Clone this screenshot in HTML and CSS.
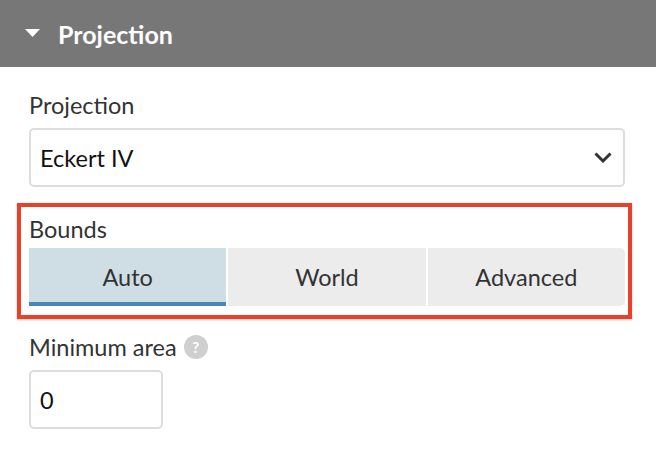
FILE: index.html
```html
<!DOCTYPE html>
<html>
<head>
<meta charset="utf-8">
<link rel="stylesheet" href="styles.css">
</head>
<body>
<div class="header">
  <svg class="caret" width="15" height="8" viewBox="0 0 15 8"><polygon points="0,0 15,0 7.5,8" fill="#fff"/></svg>
  <span class="title">Projection</span>
</div>
<div class="content">
  <div class="field first">
    <div class="label">Projection</div>
    <div class="select">
      <span>Eckert IV</span>
      <svg class="chev" width="18" height="11" viewBox="0 0 18 11"><polyline points="1.5,1.5 9,9 16.5,1.5" fill="none" stroke="#333" stroke-width="3"/></svg>
    </div>
  </div>
  <div class="field group">
    <div class="label">Bounds</div>
    <div class="seg">
      <div class="btn active">Auto</div>
      <div class="btn">World</div>
      <div class="btn last">Advanced</div>
    </div>
  </div>
  <div class="field">
    <div class="label">Minimum area <span class="help">?</span></div>
    <div class="input">0</div>
  </div>
</div>
</body>
</html>
```
FILE: styles.css
```css
html, body { margin: 0; padding: 0; background: #fff; }
body { font-family: "Lato", "Open Sans", sans-serif; color: #333; width: 656px; height: 456px; overflow: hidden; }
.header { height: 67px; background: #777; display: flex; align-items: center; padding-left: 25px; box-sizing: border-box; }
.caret { margin-right: 18px; margin-top: -2px; }
.title { color: #fff; font-weight: 700; font-size: 25px; }
.content { padding: 23px 31px 0 29px; }
.label { font-size: 23.5px; line-height: 30px; color: #333; display: flex; align-items: center; }
.field { margin-bottom: 18px; }
.field.first { margin-bottom: 27px; }
.field > .label { margin-bottom: 8px; }
.select { height: 59px; box-sizing: border-box; border: 2px solid #ddd; border-radius: 5px; display: flex; align-items: center; justify-content: space-between; padding: 0 11px 0 9px; font-size: 23.5px; color: #111; }
.group { position: relative; margin-bottom: 26px; }
.group::after { content: ""; position: absolute; left: -12px; right: -7px; top: -11px; bottom: -13px; border: 4px solid #e8412a; box-shadow: 0 1px 2px rgba(0,0,0,0.25); pointer-events: none; }
.group > .label { margin-bottom: 4px; }
.seg { display: flex; gap: 2px; height: 58px; }
.btn { flex: 1; background: #ececec; display: flex; align-items: center; justify-content: center; font-size: 23.5px; color: #333; box-sizing: border-box; }
.btn.active { background: #cfdde5; border-bottom: 4px solid #4a87b5; padding-top: 4px; }
.btn.last { border-radius: 0 5px 5px 0; }
.help { display: inline-flex; width: 24px; height: 24px; border-radius: 50%; background: #cfcfcf; color: #fff; font-weight: 700; font-size: 15px; align-items: center; justify-content: center; margin-left: 7px; }
.input { width: 134px; height: 59px; box-sizing: border-box; border: 2px solid #ddd; border-radius: 5px; display: flex; align-items: center; padding-left: 9px; font-size: 23.5px; color: #111; }
```
